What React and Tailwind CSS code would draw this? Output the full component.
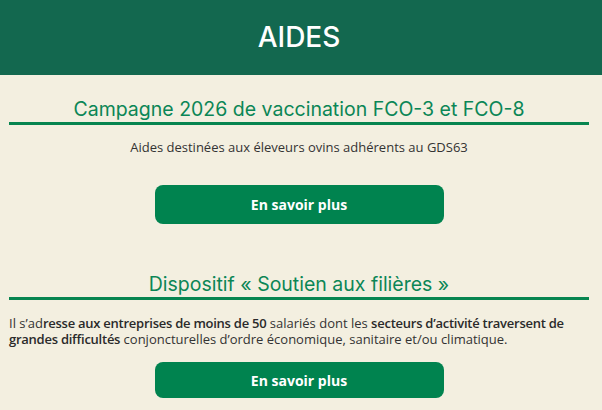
const heading = { fontFamily: 'Inter, "Liberation Sans", sans-serif' };
const body = { fontFamily: '"Open Sans", "Liberation Sans", sans-serif' };

const Button = ({ tall }) => (
  <div className="flex justify-center">
    <a
      href="#"
      className={`w-[289px] ${tall ? 'h-[39px]' : 'h-[36px]'} rounded-lg bg-[#00834f] text-white font-bold text-[14px] flex items-center justify-center`}
      style={body}
    >
      En savoir plus
    </a>
  </div>
);

const SectionTitle = ({ children }) => (
  <h2
    className="text-center text-[19.5px] text-[#0b8656] border-b-[3px] border-[#078550] leading-[24px] pb-[1px]"
    style={heading}
  >
    {children}
  </h2>
);

export default function App() {
  return (
    <div className="w-[602px] h-[410px] bg-[#f3efe0] overflow-hidden">
      {/* Bandeau */}
      <div className="h-[75px] bg-[#13684f] pl-[9px] pr-[13px]">
        <h1
          className="text-center text-white text-[28px] font-medium leading-[74px]"
          style={heading}
        >
          AIDES
        </h1>
      </div>

      <div className="pl-[9px] pr-[13px] pt-[22px]">
        <SectionTitle>Campagne 2026 de vaccination FCO-3 et FCO-8</SectionTitle>
        <p
          className="text-center text-[13px] text-[#333] mt-[13px] leading-[18px]"
          style={body}
        >
          Aides destinées aux éleveurs ovins adhérents au GDS63
        </p>
        <div className="mt-[29px]">
          <Button tall />
        </div>

        <div className="mt-[48px]">
          <SectionTitle>Dispositif « Soutien aux filières »</SectionTitle>
        </div>
        <p
          className="text-[13px] text-[#333] mt-[15px] leading-[16px]"
          style={body}
        >
          Il s’ad<strong className="font-semibold tracking-[-0.25px] text-[#2a2a2a]">resse aux entreprises de moins de 50</strong> salariés dont les{' '}
          <strong className="font-semibold tracking-[-0.25px] text-[#2a2a2a]">secteurs d’activité traversent de grandes difficultés</strong> conjoncturelles
          d’ordre économique, sanitaire et/ou climatique.
        </p>
        <div className="mt-[15px]">
          <Button />
        </div>
      </div>
    </div>
  );
}
